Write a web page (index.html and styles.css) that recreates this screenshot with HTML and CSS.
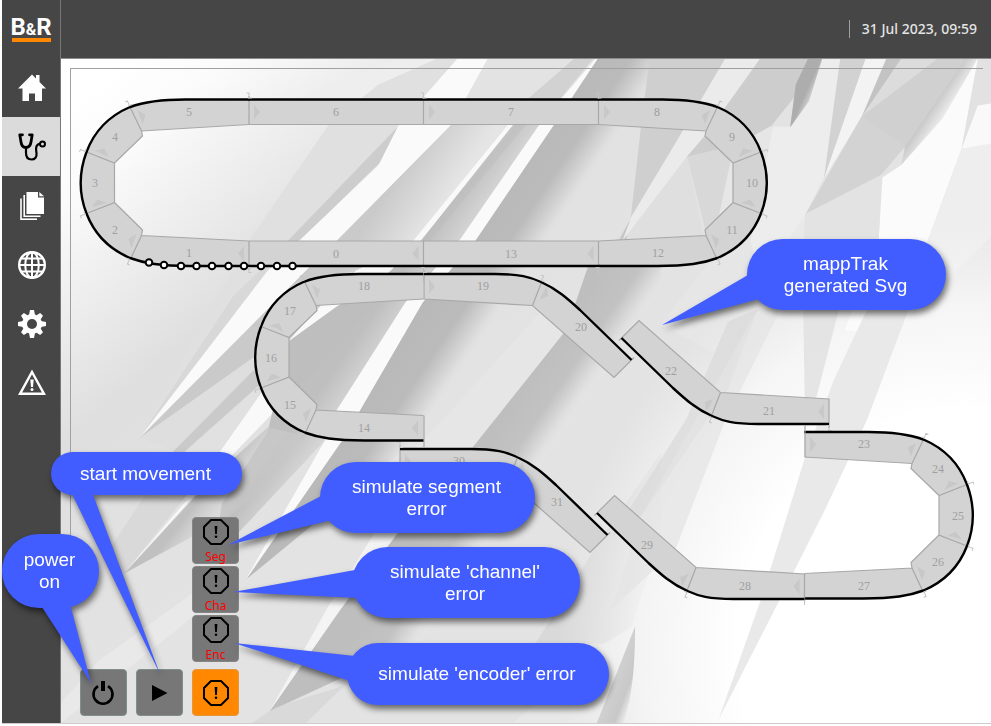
FILE: index.html
```html
<!DOCTYPE html>
<html lang="en">
<head>
<meta charset="utf-8">
<title>B&amp;R mappTrak</title>
<link rel="stylesheet" href="styles.css">
</head>
<body>
<div class="app">
  <aside class="sidebar">
    <a class="logo" href="#"><span class="logo-word">B<span class="logo-amp">&amp;</span>R</span></a>
    <nav class="nav">
      <a class="nav-item" href="#" aria-label="Home">
        <svg viewBox="0 0 28 28"><path fill="#fff" d="M14 .5 18 4.500V1h3.500v7L28 14.500h-4V27h-7v-7.500h-6V27H4.500V14.500H0z"/></svg>
      </a>
      <a class="nav-item active" href="#" aria-label="Diagnostics">
        <svg viewBox="0 0 28 28" fill="none" stroke="#000" stroke-linecap="round" stroke-linejoin="round"><path stroke-width="2.800" d="M4.500 1.800H1.800L3 9c.5 3.800 2 5.500 4.700 5.500s4.800-1.700 5.300-5.500l1.200-7.200H11.500"/><path stroke-width="2.200" d="M8 15v5c0 4.500 2.500 6.500 5.500 6.500 3.500 0 5.500-2.500 5-6.500-.5-3-1-5.500.5-7.500 1-1.400 2-1.700 3-1.700"/><circle cx="24.500" cy="11" r="2.500" stroke-width="2"/></svg>
      </a>
      <a class="nav-item" href="#" aria-label="Documents">
        <svg viewBox="0 0 28 28"><path fill="#fff" d="M8.500 0H20v5.500h6V22H8.500z"/><path fill="#fff" d="M21.300 0 26 4.300h-4.700z"/><path fill="none" stroke="#fff" stroke-width="1.600" d="M6.200 3v21.200H22.500M3 6.500V28"/><path fill="none" stroke="#fff" stroke-width="1.600" d="M3 27.200H19"/></svg>
      </a>
      <a class="nav-item" href="#" aria-label="Language">
        <svg viewBox="0 0 28 28" fill="none" stroke="#fff" stroke-width="2"><circle cx="14" cy="14" r="12.800" stroke-width="2.400"/><ellipse cx="14" cy="14" rx="6.800" ry="12.800"/><path d="M14 1v26M1 14h26M3.500 7.500h21M3.500 20.500h21"/></svg>
      </a>
      <a class="nav-item" href="#" aria-label="Settings">
        <svg viewBox="-14 -14 28 28"><g fill="#fff"><circle r="10"/><path d="M-3-9-2-14H2L3-9zM-3 9-2 14H2L3 9zM9-3 14-2V2L9 3zM-9-3-14-2V2L-9 3z"/><path transform="rotate(45)" d="M-3-9-2-13.500H2L3-9zM-3 9-2 13.500H2L3 9zM9-3 13.500-2V2L9 3zM-9-3-13.500-2V2L-9 3z"/></g><circle r="5" fill="#464646"/></svg>
      </a>
      <a class="nav-item" href="#" aria-label="Alarms">
        <svg viewBox="0 0 28 28"><path fill="none" stroke="#fff" stroke-width="2.400" d="M14 3 26 24.800H2z"/><path fill="#fff" d="M12.300 10.500h3.400L15 18h-2z"/><circle cx="14" cy="20.500" r="1.500" fill="#fff"/></svg>
      </a>
    </nav>
  </aside>
  <header class="topbar"><time class="clock" datetime="2023-07-31T09:59">31 Jul 2023, 09:59</time></header>
  <main class="stage">
    <svg class="backdrop" viewBox="61 59 930 664" preserveAspectRatio="xMidYMid slice" aria-hidden="true">
      <defs>
        <linearGradient id="base" gradientUnits="userSpaceOnUse" x1="120" y1="60" x2="420" y2="420"><stop offset="0" stop-color="#fff"/><stop offset=".15" stop-color="#fbfbfb"/><stop offset=".55" stop-color="#dfdfdf"/><stop offset="1" stop-color="#e3e3e3"/></linearGradient>
        <radialGradient id="glow" gradientUnits="userSpaceOnUse" cx="0" cy="0" r="1" gradientTransform="translate(960 640) rotate(20) scale(400 420)"><stop offset="0" stop-color="#fff"/><stop offset=".55" stop-color="#fff"/><stop offset=".8" stop-color="#fbfbfb" stop-opacity=".7"/><stop offset="1" stop-color="#f4f4f4" stop-opacity="0"/></radialGradient>
        <linearGradient id="fadeA" gradientUnits="userSpaceOnUse" x1="870" y1="290" x2="980" y2="370"><stop offset="0" stop-color="#cacaca"/><stop offset="1" stop-color="#e5e5e5"/></linearGradient>
        <linearGradient id="fadeB" gradientUnits="userSpaceOnUse" x1="1055" y1="292" x2="1130" y2="350"><stop offset="0" stop-color="#bfbfbf"/><stop offset="1" stop-color="#dadada"/></linearGradient>
        <linearGradient id="fadeC" gradientUnits="userSpaceOnUse" x1="1082" y1="430" x2="1210" y2="525"><stop offset="0" stop-color="#b9b9b9"/><stop offset=".45" stop-color="#bbb"/><stop offset=".85" stop-color="#dedede"/><stop offset="1" stop-color="#e5e5e5" stop-opacity="0"/></linearGradient>
        <linearGradient id="fadeD" gradientUnits="userSpaceOnUse" x1="1198" y1="779" x2="1325" y2="875"><stop offset="0" stop-color="#bebebe"/><stop offset=".5" stop-color="#c2c2c2"/><stop offset=".8" stop-color="#dedede"/><stop offset="1" stop-color="#e8e8e8" stop-opacity="0"/></linearGradient>
        <linearGradient id="fadeE" gradientUnits="userSpaceOnUse" x1="440" y1="950" x2="520" y2="1020"><stop offset="0" stop-color="#c0c0c0"/><stop offset="1" stop-color="#e0e0e0" stop-opacity="0"/></linearGradient>
        <linearGradient id="fadeF" gradientUnits="userSpaceOnUse" x1="1050" y1="70" x2="1100" y2="95"><stop offset="0" stop-color="#adadad"/><stop offset=".5" stop-color="#adadad"/><stop offset="1" stop-color="#e6e6e6"/></linearGradient>
        <linearGradient id="fadeG" gradientUnits="userSpaceOnUse" x1="1440" y1="1480" x2="1500" y2="1505"><stop offset="0" stop-color="#d0d0d0"/><stop offset=".6" stop-color="#c8c8c8"/><stop offset="1" stop-color="#f0f0f0"/></linearGradient>
        <linearGradient id="fadeH" gradientUnits="userSpaceOnUse" x1="1390" y1="135" x2="1430" y2="165"><stop offset="0" stop-color="#c4c4c4"/><stop offset="1" stop-color="#f2f2f2"/></linearGradient>
      </defs>
      <path fill="url(#base)" d="M61 59H991V723H61z"/>
      <g transform="translate(61 59) scale(.3827 .4235)">
        <path fill="#eee" d="M880 0H1035L830 60 700 155 640 80z"/>
        <path fill="#e0e0e0" d="M980 0H1035L880 155 850 220 720 340 540 500 205 895 490 430 700 155 830 60z"/>
        <path fill="#d8d8d8" d="M600 430 540 500 205 895 450 560z"/>
        <path fill="#cdcdcd" d="M880 160 855 225 720 345 540 510 560 460z"/>
        <path fill="#fafafa" d="M1035 0H1115L1020 155 720 430 640 500 205 895 540 500 830 250 880 160z"/>
        <path fill="#e3e3e3" d="M1115 0H1400L1250 155H1020z"/>
        <path fill="#d2d2d2" d="M1340 0H1390L1280 120 1200 110z"/>
        <path fill="url(#fadeA)" d="M1020 155H1170L940 430 770 520 700 560 520 760 205 895 640 500 720 430z"/>
        <path fill="#dedede" d="M525 690 560 740 310 930 205 895z"/>
        <path fill="#cacaca" d="M525 715 530 760 320 930H290z"/>
        <path fill="#f9f9f9" d="M1168 155H1182L940 430 850 510 720 590 597 670 560 830 390 990 165 1215 390 960 530 780 540 720 660 600 770 500 920 430z"/>
        <path fill="url(#fadeB)" d="M1182 155H1250L1040 430 900 575 720 830 690 900 400 1180 420 1050 540 880 597 665 720 585 850 510 940 430z"/>
        <path fill="#bdbdbd" opacity=".45" d="M1190 155H1215L900 500 597 800V665L720 585 850 510 940 430z"/>
        <path fill="url(#fadeE)" d="M540 870 690 900 440 1080 165 1215 400 985z"/>
        <path fill="url(#fadeC)" d="M1400 0H1568L1520 155 1500 430 1240 575 900 920 485 1228 750 880 781 830 977 525 1082 430 1288 155z"/>
        <path fill="#fafafa" d="M1396 0H1402L1288 155 1082 430 945 575 781 830 735 900 482 1230 690 900 720 830 900 575 1040 430 1250 155z"/>
        <path fill="#e8e8e8" opacity=".6" d="M1260 590 1320 640 1075 918 880 1120 700 1120 1000 850z"/>
        <path fill="url(#fadeD)" d="M1400 430H1568V900L1300 1200 1000 1350 545 1540 730 1300 880 1120 1075 918 1320 640z"/>
        <path fill="#f4f4f4" d="M880 1118 730 1300 545 1540 700 1290 820 1118z"/>
        <path fill="#cfcfcf" d="M500 1568 560 1530 740 1480 640 1568z" opacity=".5"/>
        <path fill="#d4d4d4" d="M110 1180 165 1215 330 1040 220 1030z" opacity=".6"/>
        <path fill="#ececec" d="M0 1520 100 1420 300 1290 470 1180 340 1320 0 1568z" opacity=".6"/>
        <path fill="#d9d9d9" d="M1568 930V1130L1490 1340 1420 1380H1240L1420 1120z"/>
        <path fill="#e9e9e9" d="M1420 1380 1500 1340 1400 1568H1180z" opacity=".8"/>
      </g>
      <g transform="translate(400 59) scale(.3769 .4235)">
        <path fill="#cfcfcf" d="M662 0H870L730 200 612 378 640 155z"/>
        <path fill="#dfdfdf" d="M760 225 820 480H530L612 380z"/>
        <path fill="#c6c6c6" d="M610 380 600 430 540 490 580 430z"/>
        <path fill="#ebebeb" d="M862 0H955L810 180 760 232 590 430 615 370 730 200z"/>
        <path fill="#cdcdcd" d="M955 0H1082L1055 80 985 158 885 210 760 232 810 180z"/>
        <path fill="#d8d8d8" d="M762 230 885 205 890 440H820z"/>
        <path fill="#e6e6e6" d="M885 208 985 158 1000 190 1035 160 1075 370 960 560 850 700 690 628 820 480z"/>
        <path fill="#ededed" d="M1118 0H1168L1125 280 1075 370 960 520 930 430 990 160 1035 160z"/>
        <path fill="url(#fadeF)" d="M1082 0H1120L1085 100 1035 162 1050 60z"/>
        <path fill="#d2d2d2" d="M1168 0H1236L1125 282z"/>
        <path fill="#f3f3f3" d="M1235 0H1290L1225 137 1125 282z"/>
        <path fill="#c3c3c3" d="M1290 0H1330L1225 137z"/>
        <path fill="#dcdcdc" d="M1329 0H1426L1225 137z"/>
        <path fill="#d0d0d0" d="M1425 0H1502L1340 212 1225 136z"/>
        <path fill="#e9e9e9" d="M1075 368 1400 430 1568 320V800L1240 860 860 800 960 520z"/>
        <path fill="#fbfbfb" d="M1528 0H1534L1490 212 1400 430 1300 650 1180 640 1270 430 1280 280 1330 250z"/>
        <path fill="url(#fadeH)" d="M1500 0H1532L1440 140 1330 250 1340 208z"/>
        <path fill="#e2e2e2" d="M1533 0H1568V110L1490 212z"/>
        <path fill="#eee" d="M1490 212 1568 200V420L1300 650 1400 430z"/>
        <path fill="#f9f9f9" d="M1533 110 1568 105V200L1490 212z"/>
        <path fill="#d3d3d3" d="M1225 135 1342 205 1275 275 1075 368z"/>
        <path fill="#e3e3e3" d="M1075 366 1276 274 1270 440H1070z"/>
      </g>
      <path fill="url(#glow)" d="M61 59H991V723H61z"/>
      <g transform="translate(400 59) scale(.3769 .4235)">
        <path fill="#d9d9d9" opacity=".75" d="M870 620 950 590 870 780 640 1080 560 1130 760 850z"/>
        <path fill="#e4e4e4" opacity=".7" d="M950 590H1010L860 860 730 1160 560 1300 640 1080z"/>
        <path fill="#e2e2e2" d="M1070 590H1165L1090 850 1075 870z" opacity=".9"/>
        <path fill="#e9e9e9" d="M1240 590H1350L1240 850 1130 1060 1000 1290 845 1560 960 1270 1075 940 1150 760z"/>
      </g>
      <g transform="translate(61 59) scale(.3827 .4235)">
        <path fill="url(#fadeG)" d="M1500 1340C1500 1420 1495 1500 1470 1568H1400z"/>
      </g>
    </svg>
    <section class="track-frame" aria-label="Track">
      <svg class="track" viewBox="71 69 912 536">
        <defs>
          <g id="tick"><path class="tick" d="M0-1V-6.500M-2.500-6.500H.5M-1-1.500H3"/></g>
          <path id="arrow" class="arrow" d="M0-7.500V7.500L6 0z"/>
          <g id="bend">
            <path class="fill" d="M249 99.500H185C160 99.500 145 101.500 130 107 109 116 94 132 86.500 152 79 172 79 194 86.500 213.500 94 233 109 249 130 258 145 263.500 160 266 190 266H249V241L141.500 235.500 142.500 230 114.500 202.500V163L142.500 136 141.500 131 249 124.500z"/>
            <path class="edge" d="M249 124.500 141.500 131 130 107M141.500 131 142.500 136 114.500 163 86.500 152M114.500 163V202.500L86.500 213.500M114.500 202.500 142.500 230 141.500 235.500 249 241M141.500 235.500 131 258"/>
            <path class="rail" d="M249.500 99.500H185C160 99.500 145 101.500 130 107 109 116 94 132 86.500 152 79 172 79 194 86.500 213.500 94 233 109 249 130 258 145 263.500 160 266 190 266H249.500"/>
            <use href="#tick" transform="translate(130 107) rotate(-23)"/><use href="#tick" transform="translate(86.500 152) rotate(-68)"/><use href="#tick" transform="translate(86.500 213.500) rotate(-112)"/><use href="#tick" transform="translate(130 258) rotate(-157)"/>
            <use href="#arrow" transform="translate(140 117) rotate(-20)"/><use href="#arrow" transform="translate(102 154) rotate(-65)"/><use href="#arrow" transform="translate(99 205) rotate(-105)"/><use href="#arrow" transform="translate(134 241) rotate(-160)"/>
          </g>
          <g id="branch">
            <path class="fill" d="M424 274H495C520 274 530 277 541 282 557 289 568 299 580 310L631.500 360 614 377.500 532.500 305.500 424 299z"/>
            <path class="edge" d="M424 270V299L532.500 305.500 614 377.500 634 357.500M532.500 305.500 542 281"/>
            <path class="rail" d="M424 274H495C520 274 530 277 541 282 557 289 568 299 580 310L631.500 360"/>
            <use href="#tick" transform="translate(541 282) rotate(23)"/><use href="#tick" transform="translate(424 274)"/>
            <use href="#arrow" transform="translate(543 293) rotate(28)"/><use href="#arrow" transform="translate(429 286.500)"/>
          </g>
        </defs>
        <path class="fill" d="M249 99.500H598.500V124.500H249zM249 241H598.500V266H249z"/>
        <use href="#bend"/>
        <use href="#bend" transform="matrix(-1 0 0 1 847.500 0)"/>
        <path class="edge" d="M249 124.500H598.500M249 241H598.500M249 96V124.500M423.500 96V124.500M598.500 96V124.500M249 241V270M423.500 241V270M598.500 241V270"/>
        <path class="rail" d="M248 99.500H599.500M248 266H599.500"/>
        <use href="#tick" x="249" y="99.500"/><use href="#tick" x="423.500" y="99.500"/><use href="#tick" x="598.500" y="99.500"/>
        <use href="#tick" transform="translate(249 266) rotate(180)"/><use href="#tick" transform="translate(598.500 266) rotate(180)"/>
        <use href="#arrow" x="254" y="112"/><use href="#arrow" x="429" y="112"/><use href="#arrow" x="604" y="112"/>
        <use href="#arrow" transform="translate(244 253.500) rotate(180)"/><use href="#arrow" transform="translate(418.500 253.500) rotate(180)"/><use href="#arrow" transform="translate(593.500 253.500) rotate(180)"/>
        <use href="#bend" transform="translate(174.500 174.500)"/>
        <path class="edge" d="M424 415.500V447"/>
        <use href="#branch"/>
        <use href="#branch" transform="rotate(180 626.500 349)"/>
        <use href="#branch" transform="translate(-24 175)"/>
        <use href="#arrow" transform="translate(418 428) rotate(180)"/>
        <use href="#bend" transform="matrix(-1 0 0 1 1053.500 332.500)"/>
        <path class="edge" d="M805 426V457"/>
        <use href="#arrow" x="810" y="444.500"/>
        <use href="#branch" transform="translate(-24.500 175) rotate(180 626.500 349)"/>
        <g class="num">
          <text x="189" y="116">5</text><text x="336" y="116">6</text><text x="511" y="116">7</text><text x="657" y="116">8</text>
          <text x="115" y="141">4</text><text x="95" y="187">3</text><text x="115" y="234">2</text><text x="189" y="257">1</text>
          <text x="336" y="258">0</text><text x="511" y="258">13</text><text x="658" y="257">12</text><text x="732" y="234">11</text>
          <text x="752" y="187">10</text><text x="732" y="141">9</text><text x="364" y="290">18</text><text x="483" y="290">19</text>
          <text x="581" y="331">20</text><text x="290" y="315">17</text><text x="271" y="362">16</text><text x="290" y="409">15</text>
          <text x="364" y="432">14</text><text x="459" y="465">30</text><text x="557" y="506">31</text><text x="671" y="375">22</text>
          <text x="769" y="415">21</text><text x="864" y="448">23</text><text x="938" y="473">24</text><text x="958" y="520">25</text>
          <text x="938" y="566">26</text><text x="864" y="590">27</text><text x="745" y="590">28</text><text x="647" y="549">29</text>
        </g>
        <g class="shuttles">
          <circle cx="149" cy="262.500" r="3.300"/><circle cx="164" cy="265" r="3.300"/><circle cx="181" cy="266" r="3.300"/><circle cx="196.500" cy="266" r="3.300"/><circle cx="212" cy="266" r="3.300"/><circle cx="228.500" cy="266" r="3.300"/><circle cx="244" cy="266" r="3.300"/><circle cx="261" cy="266" r="3.300"/><circle cx="277" cy="266" r="3.300"/><circle cx="292.500" cy="266" r="3.300"/>
        </g>
      </svg>
    </section>
    <div class="controls">
      <button class="key" aria-label="Power"><svg viewBox="0 0 28 28" fill="none" stroke="#000"><path stroke-width="2.600" d="M8 7.200A9.500 9.500 0 1 0 18 7.200"/><path stroke-width="4" d="M13 2V12"/></svg></button>
      <button class="key" aria-label="Start"><svg viewBox="0 0 28 28"><path d="M6 6 21.500 14 6 22z"/></svg></button>
      <div class="errors">
        <button class="key error"><svg viewBox="0 0 28 28"><path class="oct" d="M9 2H19L26 9V19L19 26H9L2 19V9z"/><path d="M12.600 8h2.800l-.5 8h-1.800z"/><circle cx="14" cy="18.700" r="1.300"/></svg>Seg</button>
        <button class="key error"><svg viewBox="0 0 28 28"><path class="oct" d="M9 2H19L26 9V19L19 26H9L2 19V9z"/><path d="M12.600 8h2.800l-.5 8h-1.800z"/><circle cx="14" cy="18.700" r="1.300"/></svg>Cha</button>
        <button class="key error"><svg viewBox="0 0 28 28"><path class="oct" d="M9 2H19L26 9V19L19 26H9L2 19V9z"/><path d="M12.600 8h2.800l-.5 8h-1.800z"/><circle cx="14" cy="18.700" r="1.300"/></svg>Enc</button>
        <button class="key alert" aria-label="Errors"><svg viewBox="0 0 28 28"><path class="oct" d="M9 2H19L26 9V19L19 26H9L2 19V9z"/><path d="M12.600 8h2.800l-.5 8h-1.800z"/><circle cx="14" cy="18.700" r="1.300"/></svg></button>
      </div>
    </div>
  </main>
</div>
<div class="callout c-svg"><svg class="tail"><path d="M1 36 -85 86 12 60 30 40z"/></svg><span>mappTrak<br>generated Svg</span></div>
<div class="callout c-start"><svg class="tail"><path d="M20 40 109 222 41 40z"/></svg><span>start movement</span></div>
<div class="callout c-power"><svg class="tail"><path d="M38 70 89 149 67 66z"/></svg><span>power<br>on</span></div>
<div class="callout c-seg"><svg class="tail"><path d="M1 34 -92 83 12 58 30 40z"/></svg><span>simulate segment<br>error</span></div>
<div class="callout c-cha"><svg class="tail"><path d="M3 23 -119 45 6 51 30 40z"/></svg><span>simulate 'channel'<br>error</span></div>
<div class="callout c-enc"><svg class="tail"><path d="M8 13 -113 0 3 38 30 40z"/></svg><span>simulate 'encoder' error</span></div>
</body>
</html>
```
FILE: styles.css
```css
* { box-sizing: border-box; }
body {
  margin: 0;
  position: relative;
  background: #fff;
  overflow: hidden;
  font-family: "Noto Sans", "Open Sans", sans-serif;
}
.app {
  display: grid;
  grid-template-columns: 59px 1fr;
  grid-template-rows: 59px 1fr;
  height: calc(100vh - 2px);
  margin-left: 2px;
  border-bottom: 1px solid #ccc;
}
.sidebar {
  grid-row: 1 / 3;
  background: #464646;
  border-right: 1px solid #777;
}
.logo {
  display: flex;
  justify-content: center;
  height: 58px;
  padding-top: 15px;
  text-decoration: none;
}
.logo-word {
  height: 27px;
  width: 39px;
  display: flex;
  justify-content: center;
  align-items: baseline;
  border-bottom: 4px solid #ff8800;
  color: #fff;
  font: 700 24px/24px Roboto, sans-serif;
}
.logo-amp { font-size: 16px; }
.nav { display: flex; flex-direction: column; }
.nav-item {
  display: flex;
  align-items: center;
  justify-content: center;
  height: 59px;
  padding-left: 1px;
}
.nav-item.active { background: #dbdbdb; }
.nav-item svg { width: 28px; height: 28px; }
.topbar {
  display: flex;
  align-items: center;
  justify-content: flex-end;
  padding-right: 14px;
  background: #464646;
  border-bottom: 1px solid #8c8c8c;
}
.clock {
  padding-left: 12px;
  border-left: 1px solid #a0a0a0;
  color: #e4e4e4;
  font-size: 14px;
  font-weight: 500;
  line-height: 18px;
}
.stage {
  position: relative;
  display: grid;
  min-height: 0;
  overflow: hidden;
}
.backdrop {
  position: absolute;
  inset: 0;
  width: 100%;
  height: 100%;
}
.track-frame {
  position: relative;
  grid-area: 1 / 1;
  align-self: start;
  margin: 9px 8px 0 9px;
  border-top: 1px solid #a0a0a0;
  border-left: 1px solid #a0a0a0;
}
.track { display: block; width: 100%; }
.fill { fill: #d3d3d3; }
.edge { fill: none; stroke: #a8a8a8; stroke-width: 1.2; }
.rail { fill: none; stroke: #000; stroke-width: 2.4; }
.tick { fill: none; stroke: #c4c4c4; stroke-width: 1; }
.arrow { fill: #c8c8c8; }
.num {
  fill: #a0a0a0;
  font-family: "Liberation Serif", serif;
  font-size: 12px;
  text-anchor: middle;
}
.shuttles { fill: #fff; stroke: #000; stroke-width: 2; }
.controls {
  position: relative;
  grid-area: 1 / 1;
  place-self: end start;
  display: flex;
  align-items: flex-end;
  gap: 9px;
  padding: 0 0 7px 19px;
}
.errors { display: flex; flex-direction: column; gap: 2px; }
.key {
  display: flex;
  flex-direction: column;
  align-items: center;
  justify-content: center;
  width: 47px;
  height: 47px;
  padding: 0;
  border: 1px solid #80908a;
  border-radius: 4px;
  background: #777;
}
.key svg { flex: none; width: 28px; height: 28px; }
.oct { fill: none; stroke: #000; stroke-width: 2; }
.error {
  justify-content: flex-start;
  border-color: #858585;
  color: #f00;
  font: 12px/22px "Noto Sans", sans-serif;
}
.alert { margin-top: 5px; background: #ff8800; border-color: #e8963a; }
.callout {
  position: absolute;
  display: flex;
  align-items: center;
  justify-content: center;
  padding-right: 2px;
  background: #415cff;
  color: #fff;
  text-align: center;
  font: 19px/22px "Liberation Sans", sans-serif;
  filter: drop-shadow(2px 4px 3px rgba(0, 0, 0, .55));
}
.callout span { position: relative; }
.tail {
  position: absolute;
  left: 0;
  top: 0;
  width: 1px;
  height: 1px;
  overflow: visible;
  fill: #415cff;
}
.c-svg { left: 747px; top: 239px; width: 199px; height: 71px; border-radius: 36px; }
.c-start { left: 51px; top: 452px; width: 191px; height: 43px; border-radius: 22px; }
.c-power { left: 2px; top: 534px; width: 97px; height: 74px; border-radius: 37px; }
.c-seg { left: 320px; top: 462px; width: 215px; height: 71px; border-radius: 36px; }
.c-cha { left: 352px; top: 547px; width: 228px; height: 71px; border-radius: 36px; }
.c-enc { left: 347px; top: 643px; width: 262px; height: 62px; border-radius: 31px; }
```
